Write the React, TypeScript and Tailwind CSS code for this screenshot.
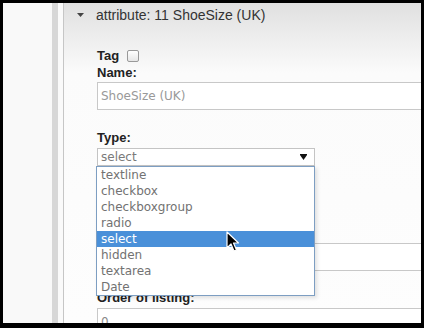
import React from 'react'

const options = ['textline', 'checkbox', 'checkboxgroup', 'radio', 'select', 'hidden', 'textarea', 'Date']

const label = "block text-[13px] leading-[16px] font-bold text-[#222] font-['Liberation_Sans',Arial,sans-serif]"
const field = "font-['DejaVu_Sans',sans-serif] text-[12px]"

function Cursor() {
  return (
    <svg className="absolute left-[222px] top-[228px] z-20" width="14" height="22" viewBox="0 0 14 22">
      <path d="M2 1 L2 17 L6 13 L9 20 L11.5 19 L8.5 12 L13.5 12 Z" fill="#000" stroke="#fff" strokeWidth="1.2" strokeLinejoin="round" />
    </svg>
  )
}

export default function App() {
  return (
    <div className="w-[424px] h-[328px] bg-black pt-[3px] px-[3px] pb-[5px] overflow-hidden">
      <div className="relative flex h-full bg-white overflow-hidden">
        <div className="w-[49px] shrink-0 bg-[#f9f9f9]" />
        <div className="w-[6px] shrink-0 bg-[#d7d7d7]" />
        <div className="w-[5px] shrink-0 bg-[#fafafa]" />
        <div className="w-px shrink-0 bg-[#c6c6c6]" />

        <div className="flex-1 min-w-0 flex flex-col bg-[linear-gradient(to_bottom,#e0e0e0_0px,#fbfbfb_70px,#fdfdfd_100%)]">
          <div className="h-[24px] shrink-0 flex items-center pl-[13px] gap-[12px] font-['Liberation_Sans',Arial,sans-serif] text-[14px] text-[#333]">
            <svg width="7" height="4" viewBox="0 0 7 4">
              <path d="M0 0 L7 0 L3.5 4 Z" fill="#444" />
            </svg>
            <span>attribute: 11 ShoeSize (UK)</span>
          </div>

          <div className="pl-[33px] flex flex-col">
            <div className="mt-[21px] flex items-center gap-[8px]">
              <span className={label}>Tag</span>
              <span className="w-[12px] h-[12px] rounded-[2px] border border-[#999] bg-[linear-gradient(to_bottom,#ffffff,#e6e6e6)]" />
            </div>
            <span className={`${label} mt-px`}>Name:</span>
            <div className={`${field} mt-px h-[28px] w-[340px] shrink-0 border border-[#c8c8c8] bg-white pl-[3px] flex items-center text-[#999]`}>
              ShoeSize (UK)
            </div>

            <span className={`${label} mt-[20px]`}>Type:</span>
            <div className="relative mt-[2px] w-[218px] z-10">
              <div className={`${field} h-[18px] border border-[#c4c4c4] bg-white pl-[3px] pr-[7px] flex items-center justify-between text-[#7a7a7a]`}>
                <span>select</span>
                <svg width="7" height="6" viewBox="0 0 7 6">
                  <path d="M0 1 L7 1 L3.5 6 Z" fill="#111" />
                  <rect x="0" y="0" width="7" height="1" fill="#111" />
                </svg>
              </div>
              <ul className={`${field} absolute top-full -left-px w-[219px] border border-[#7d9ec2] bg-white shadow-[2px_2px_4px_rgba(0,0,0,0.12)]`}>
                {options.map((o) => (
                  <li
                    key={o}
                    className={`h-[16px] leading-[16px] pl-[4px] ${o === 'select' ? 'bg-[#4a90d9] text-white' : 'text-[#727272]'}`}
                  >
                    {o}
                  </li>
                ))}
              </ul>
            </div>

            <div className="mt-[77px] h-[28px] w-[340px] shrink-0 border border-[#c8c8c8] bg-white" />

            <span className={`${label} mt-[19px]`}>Order of listing:</span>
            <div className={`${field} mt-[2px] h-[28px] w-[340px] shrink-0 border border-[#c8c8c8] bg-white pl-[3px] flex items-center text-[#888]`}>
              0
            </div>
          </div>
        </div>
        <Cursor />
      </div>
    </div>
  )
}
